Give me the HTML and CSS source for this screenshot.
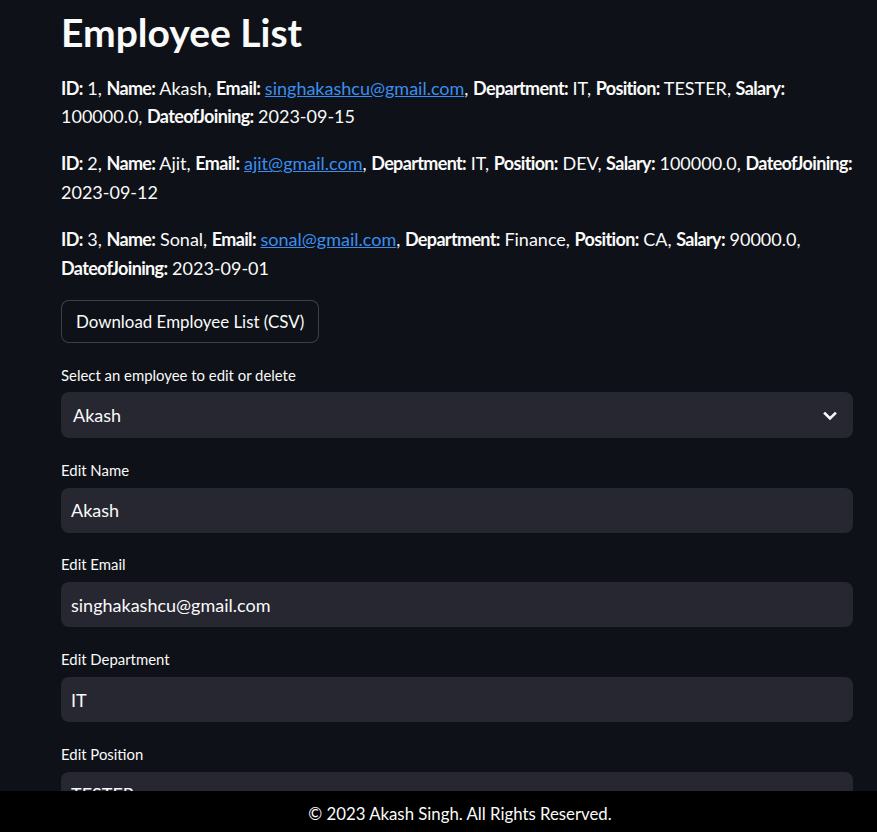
FILE: index.html
```html
<!DOCTYPE html>
<html lang="en">
<head>
<meta charset="utf-8">
<title>Employee List</title>
<link rel="stylesheet" href="styles.css">
</head>
<body>
<main class="main">
  <h1 class="title">Employee List</h1>
  <p class="rec"><b>ID:</b> 1, <b>Name:</b> Akash, <b>Email:</b> <a href="#">singhakashcu@gmail.com</a>, <b>Department:</b> IT, <b>Position:</b> TESTER, <b>Salary:</b> 100000.0, <b>DateofJoining:</b> 2023-09-15</p>
  <p class="rec"><b>ID:</b> 2, <b>Name:</b> Ajit, <b>Email:</b> <a href="#">ajit@gmail.com</a>, <b>Department:</b> IT, <b>Position:</b> DEV, <b>Salary:</b> 100000.0, <b>DateofJoining:</b> 2023-09-12</p>
  <p class="rec"><b>ID:</b> 3, <b>Name:</b> Sonal, <b>Email:</b> <a href="#">sonal@gmail.com</a>, <b>Department:</b> Finance, <b>Position:</b> CA, <b>Salary:</b> 90000.0, <b>DateofJoining:</b> 2023-09-01</p>

  <div class="widgets">
    <div><button class="btn" type="button">Download Employee List (CSV)</button></div>

    <div class="field">
      <div class="label label-select">Select an employee to edit or delete</div>
      <div class="select">
        <span>Akash</span>
        <svg class="chev" width="14" height="10" viewBox="0 0 14 10"><path d="M2 2.5 L7 7.5 L12 2.5" fill="none" stroke="#fafafa" stroke-width="2.6" stroke-linecap="square"/></svg>
      </div>
    </div>

    <div class="field">
      <div class="label">Edit Name</div>
      <div class="input">Akash</div>
    </div>
    <div class="field">
      <div class="label">Edit Email</div>
      <div class="input">singhakashcu@gmail.com</div>
    </div>
    <div class="field">
      <div class="label">Edit Department</div>
      <div class="input">IT</div>
    </div>
    <div class="field">
      <div class="label">Edit Position</div>
      <div class="input">TESTER</div>
    </div>
    <div class="field">
      <div class="label">Edit Salary</div>
      <div class="input">100000.0</div>
    </div>
  </div>
</main>
<footer class="footer">© 2023 Akash Singh. All Rights Reserved.</footer>
</body>
</html>
```
FILE: styles.css
```css
* { box-sizing: border-box; }
html, body { margin: 0; padding: 0; }
body {
  background: #0e1117;
  color: #fafafa;
  font-family: Lato, "Open Sans", sans-serif;
  font-size: 18px;
  overflow: hidden;
  height: 832px;
}
.main {
  padding: 0 24px 0 61px;
}
.title {
  margin: 0;
  padding-top: 6px;
  font-size: 39px;
  line-height: 52px;
  font-weight: 700;
}
.rec {
  margin: 15.6px 0 18px;
  line-height: 28.8px;
}
.rec + .rec { margin-top: 0; }
.rec b { font-weight: 700; letter-spacing: -0.65px; }
.rec a { color: #3b8eef; text-decoration: underline; }
.widgets {
  display: flex;
  flex-direction: column;
  gap: 20.67px;
  margin-top: 1.5px;
}
.btn {
  display: inline-flex;
  align-items: center;
  height: 43px;
  padding: 0 14px;
  background: #0e1117;
  color: #fafafa;
  border: 1px solid rgba(250,250,250,0.2);
  border-radius: 8px;
  font: inherit;
  font-size: 16.9px;
}
.label {
  font-size: 14.9px;
  line-height: 22px;
  margin-bottom: 7px;
}
.label-select { margin-bottom: 6px; }
.select {
  height: 46px;
  background: #262730;
  border-radius: 8px;
  display: flex;
  align-items: center;
  justify-content: space-between;
  padding: 0 16px 0 12px;
}
.chev { margin-top: 2px; }
.input {
  height: 45px;
  background: #262730;
  border-radius: 8px;
  display: flex;
  align-items: center;
  padding: 0 10px;
}
.footer {
  position: fixed;
  left: 0;
  right: 0;
  bottom: 0;
  height: 41px;
  background: #000;
  color: #fafafa;
  display: flex;
  align-items: center;
  justify-content: center;
  padding: 3px 0 0 43px;
  font-size: 16.8px;
}
```
